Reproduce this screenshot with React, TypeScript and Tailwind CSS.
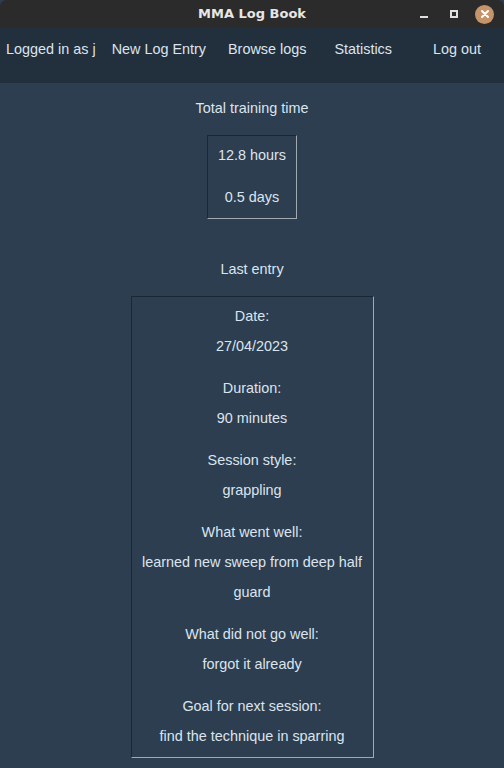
import React from 'react';

const nav = [
  { label: 'Logged in as j', ml: 'ml-[6px]' },
  { label: 'New Log Entry', ml: 'ml-[16px]' },
  { label: 'Browse logs', ml: 'ml-[22px]' },
  { label: 'Statistics', ml: 'ml-[28px]' },
  { label: 'Log out', ml: 'ml-[41px]' },
];

const entry: { label: string; value: React.ReactNode }[] = [
  { label: 'Date:', value: '27/04/2023' },
  { label: 'Duration:', value: '90 minutes' },
  { label: 'Session style:', value: 'grappling' },
  {
    label: 'What went well:',
    value: (
      <>
        learned new sweep from deep half
        <br />
        guard
      </>
    ),
  },
  { label: 'What did not go well:', value: 'forgot it already' },
  { label: 'Goal for next session:', value: 'find the technique in sparring' },
];

export default function App() {
  return (
    <div className="w-[504px] h-[768px] overflow-hidden bg-[#2c3e50] text-[#dce4ee] font-['Liberation_Sans',Arial,sans-serif] text-[14.4px]">
      {/* window title bar */}
      <div className="relative h-[28px] bg-[#2b2b2b] flex items-center justify-center rounded-t-[6px]">
        <span className="font-['DejaVu_Sans',sans-serif] font-bold text-[13px] text-[#e6e6e6]">MMA Log Book</span>
        <div className="absolute right-[10px] top-0 h-full flex items-center">
          <div className="w-[8px] h-[2px] bg-[#e0e0e0] mt-[6px]" />
          <div className="ml-[22px] w-[8px] h-[8px] border-2 border-[#e0e0e0]" />
          <div className="ml-[17px] w-[19px] h-[19px] rounded-full bg-[#c4956a] flex items-center justify-center">
            <svg width="10" height="10" viewBox="0 0 10 10">
              <path d="M2 2 L8 8 M8 2 L2 8" stroke="#fff" strokeWidth="2" strokeLinecap="round" />
            </svg>
          </div>
        </div>
      </div>

      {/* nav bar */}
      <div className="h-[55px] bg-[#222f3d] flex items-start pt-[11px]">
        {nav.map((n) => (
          <span key={n.label} className={`${n.ml} leading-[20px] whitespace-nowrap`}>
            {n.label}
          </span>
        ))}
      </div>

      <div className="flex flex-col items-center">
        <div className="mt-[15px] leading-[20px]">Total training time</div>
        <div className="mt-[17px] w-[90px] border border-t-[#1b2733] border-l-[#1b2733] border-b-[#a3a9b0] border-r-[#a3a9b0] text-center">
          <div className="pt-[4px] pb-[7px] leading-[30px]">12.8 hours</div>
          <div className="pt-[5px] pb-[6px] leading-[30px]">0.5 days</div>
        </div>

        <div className="mt-[40px] leading-[20px]">Last entry</div>
        <div className="mt-[17px] w-[243px] border border-t-[#1b2733] border-l-[#1b2733] border-b-[#a3a9b0] border-r-[#a3a9b0] text-center">
          {entry.map((e, i) => (
            <div
              key={e.label}
              className={i === entry.length - 1 ? 'pt-[4px] pb-[6px] leading-[30px]' : 'pt-[4px] pb-[8px] leading-[30px]'}
            >
              <div>{e.label}</div>
              <div className="whitespace-nowrap">{e.value}</div>
            </div>
          ))}
        </div>
      </div>
    </div>
  );
}
